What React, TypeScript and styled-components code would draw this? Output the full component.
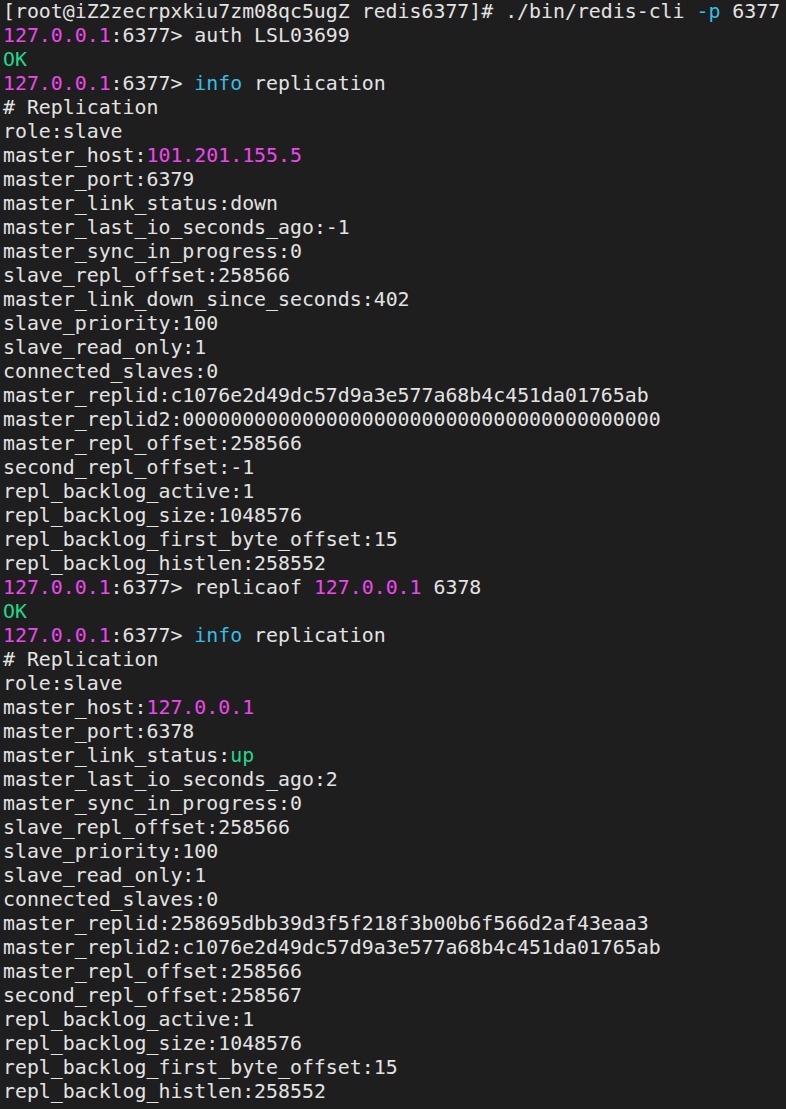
import React from "react";
import styled, { createGlobalStyle } from "styled-components";

const Global = createGlobalStyle`
  html, body { margin: 0; padding: 0; background: #1e1e1e; }
  #root { min-height: 100vh; background: #1e1e1e; }
`;

const Terminal = styled.div`
  background: #1e1e1e;
  min-height: 1109px;
  padding: 0 0 0 3px;
  box-sizing: border-box;
  font-family: "DejaVu Sans Mono", "Liberation Mono", monospace;
  font-size: 19.88px;
  line-height: 24px;
  color: #e3e3e3;
  white-space: pre;
  overflow: hidden;
`;

const Line = styled.div`
  height: 24px;
`;

type Tone = "magenta" | "cyan" | "green";
const tones: Record<Tone, string> = {
  magenta: "#f046f0",
  cyan: "#36bde6",
  green: "#23d88b",
};

const Seg = styled.span<{ $tone: Tone }>`
  color: ${(p) => tones[p.$tone]};
`;

const Prompt = () => (
  <>
    <Seg $tone="magenta">127.0.0.1</Seg>:6377&gt;{" "}
  </>
);

const Ok = () => (
  <Line>
    <Seg $tone="green">OK</Seg>
  </Line>
);

const KV = ({ k, v, tone }: { k: string; v: string; tone?: Tone }) => (
  <Line>
    {k}:{tone ? <Seg $tone={tone}>{v}</Seg> : v}
  </Line>
);

const firstInfo: [string, string, Tone?][] = [
  ["role", "slave"],
  ["master_host", "101.201.155.5", "magenta"],
  ["master_port", "6379"],
  ["master_link_status", "down"],
  ["master_last_io_seconds_ago", "-1"],
  ["master_sync_in_progress", "0"],
  ["slave_repl_offset", "258566"],
  ["master_link_down_since_seconds", "402"],
  ["slave_priority", "100"],
  ["slave_read_only", "1"],
  ["connected_slaves", "0"],
  ["master_replid", "c1076e2d49dc57d9a3e577a68b4c451da01765ab"],
  ["master_replid2", "0000000000000000000000000000000000000000"],
  ["master_repl_offset", "258566"],
  ["second_repl_offset", "-1"],
  ["repl_backlog_active", "1"],
  ["repl_backlog_size", "1048576"],
  ["repl_backlog_first_byte_offset", "15"],
  ["repl_backlog_histlen", "258552"],
];

const secondInfo: [string, string, Tone?][] = [
  ["role", "slave"],
  ["master_host", "127.0.0.1", "magenta"],
  ["master_port", "6378"],
  ["master_link_status", "up", "green"],
  ["master_last_io_seconds_ago", "2"],
  ["master_sync_in_progress", "0"],
  ["slave_repl_offset", "258566"],
  ["slave_priority", "100"],
  ["slave_read_only", "1"],
  ["connected_slaves", "0"],
  ["master_replid", "258695dbb39d3f5f218f3b00b6f566d2af43eaa3"],
  ["master_replid2", "c1076e2d49dc57d9a3e577a68b4c451da01765ab"],
  ["master_repl_offset", "258566"],
  ["second_repl_offset", "258567"],
  ["repl_backlog_active", "1"],
  ["repl_backlog_size", "1048576"],
  ["repl_backlog_first_byte_offset", "15"],
  ["repl_backlog_histlen", "258552"],
];

export default function App() {
  return (
    <>
      <Global />
      <Terminal>
        <Line>
          [root@iZ2zecrpxkiu7zm08qc5ugZ redis6377]# ./bin/redis-cli{" "}
          <Seg $tone="cyan">-p</Seg> 6377
        </Line>
        <Line>
          <Prompt />
          auth LSL03699
        </Line>
        <Ok />
        <Line>
          <Prompt />
          <Seg $tone="cyan">info</Seg> replication
        </Line>
        <Line># Replication</Line>
        {firstInfo.map(([k, v, t], i) => (
          <KV key={"a" + i} k={k} v={v} tone={t} />
        ))}
        <Line>
          <Prompt />
          replicaof <Seg $tone="magenta">127.0.0.1</Seg> 6378
        </Line>
        <Ok />
        <Line>
          <Prompt />
          <Seg $tone="cyan">info</Seg> replication
        </Line>
        <Line># Replication</Line>
        {secondInfo.map(([k, v, t], i) => (
          <KV key={"b" + i} k={k} v={v} tone={t} />
        ))}
      </Terminal>
    </>
  );
}
